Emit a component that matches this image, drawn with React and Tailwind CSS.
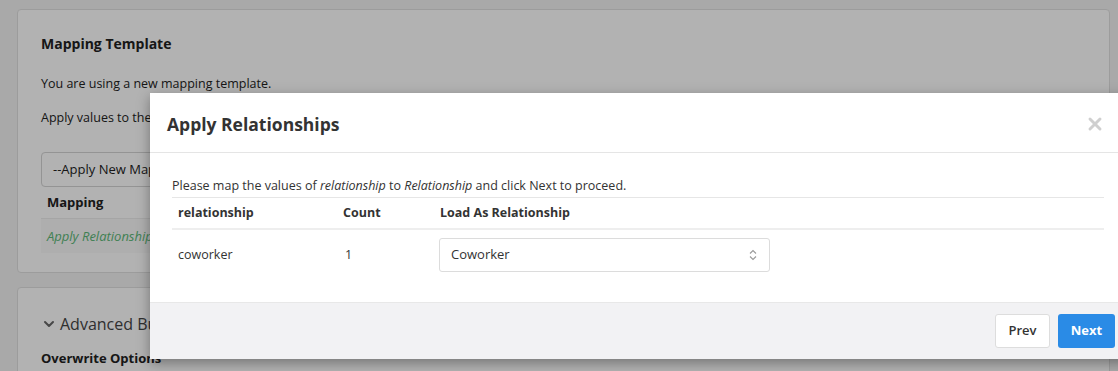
import React from 'react';
import { ChevronDown, X } from 'lucide-react';

const font = { fontFamily: '"Open Sans", "Noto Sans", sans-serif' };

function SelectArrows() {
  return (
    <svg width="8" height="12" viewBox="0 0 8 12" fill="none" stroke="#9a9a9a" strokeWidth="1.1">
      <path d="M1 4.5 L4 1.5 L7 4.5" />
      <path d="M1 7.5 L4 10.5 L7 7.5" />
    </svg>
  );
}

export default function App() {
  const rows = [{ value: 'coworker', count: 1, loadAs: 'Coworker' }];

  return (
    <div className="relative w-[1118px] h-[371px] overflow-hidden bg-[#f2f2f2] text-[#222]" style={font}>
      {/* page behind the dialog */}
      <div className="pl-[17px] pr-[8px] pt-[9px] flex flex-col gap-[14px]">
        <div className="bg-white border border-[#e0e0e0] rounded-[4px] px-[23px] pt-[24px] h-[264px]">
          <h3 className="text-[14px] font-bold leading-[20px]">Mapping Template</h3>
          <p className="text-[12.5px] mt-[20px] leading-[20px]">You are using a new mapping template.</p>
          <p className="text-[12.5px] mt-[14px] leading-[20px]">Apply values to the mapping template below.</p>
          <div className="mt-[24px] h-[35px] w-[400px] border border-[#d4d4d4] rounded-[4px] flex items-center px-[11px] text-[13px]">
            --Apply New Mapping Template--
          </div>
          <div className="px-[6px] text-[13px] font-bold leading-[31px] border-b border-[#ececec]">Mapping</div>
          <div className="px-[6px] bg-[#f9f9f9] text-[13px] italic text-[#5cb878] leading-[34px]">Apply Relationships</div>
        </div>
        <div className="bg-white border border-[#e0e0e0] rounded-[4px] px-[23px] pt-[24px] h-[120px]">
          <div className="flex items-center gap-[3px] text-[#444]">
            <ChevronDown size={16} strokeWidth={3} className="text-[#666]" />
            <span className="text-[16px]">Advanced Bulk Load Options</span>
          </div>
          <div className="mt-[13px] text-[13px] font-bold">Overwrite Options</div>
        </div>
      </div>

      {/* dim overlay */}
      <div className="absolute inset-0 bg-black/30" />

      {/* dialog */}
      <div className="absolute left-[150px] top-[93px] w-[980px] bg-white shadow-[0_4px_12px_rgba(0,0,0,0.35)] text-[#333]">
        <div className="h-[60px] flex items-center justify-between px-[17px] pt-[3px] border-b border-[#e5e5e5]">
          <h2 className="text-[17.5px] font-bold text-[#333]">Apply Relationships</h2>
          <X size={20} strokeWidth={3.5} className="text-[#cfcfcf] mr-[8px]" />
        </div>
        <div className="px-[22px] pt-[24px] pb-[25px] pr-[26px]">
          <p className="text-[12.5px] leading-[18px] pb-[2px] border-b border-[#e6e6e6]">
            Please map the values of <em>relationship</em> to <em>Relationship</em> and click Next to proceed.
          </p>
          <table className="w-full text-[12.5px] border-collapse">
            <thead>
              <tr className="border-b-2 border-[#eeeeee]">
                <th className="text-left font-bold w-[165px] px-[6px] h-[31px]">relationship</th>
                <th className="text-left font-bold w-[97px] px-[6px]">Count</th>
                <th className="text-left font-bold px-[6px]">Load As Relationship</th>
              </tr>
            </thead>
            <tbody>
              {rows.map(row => (
                <tr key={row.value}>
                  <td className="px-[6px] h-[48px] pt-[3px] text-[#333]">{row.value}</td>
                  <td className="px-[8px] pt-[3px] text-[#333]">{row.count}</td>
                  <td className="px-[5px] pt-[3px]">
                    <div className="w-[331px] h-[34px] border border-[#dcdcdc] rounded-[3px] flex items-center justify-between px-[11px] pr-[12px] text-[13px]">
                      <span>{row.loadAs}</span>
                      <SelectArrows />
                    </div>
                  </td>
                </tr>
              ))}
            </tbody>
          </table>
        </div>
        <div className="h-[57px] bg-[#f2f2f4] border-t border-[#e8e8e8] flex items-center justify-end gap-[8px] pr-[15px]">
          <button className="h-[34px] w-[55px] bg-white border border-[#dddddd] rounded-[3px] text-[13px] font-semibold text-[#333]">
            Prev
          </button>
          <button className="h-[34px] w-[57px] bg-[#2a8be6] rounded-[3px] text-[13px] font-bold text-white">
            Next
          </button>
        </div>
      </div>
    </div>
  );
}
